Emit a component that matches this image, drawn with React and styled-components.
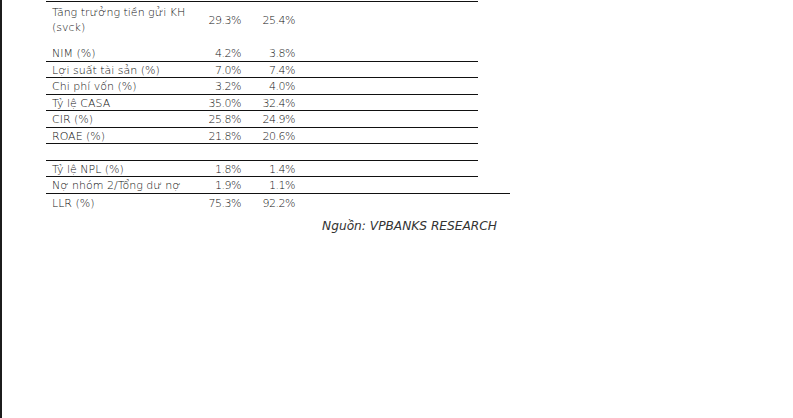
import styled, { createGlobalStyle } from 'styled-components';

const GlobalStyle = createGlobalStyle`
  html, body {
    margin: 0;
    padding: 0;
    background: #fff;
  }
  body {
    font-family: 'DejaVu Sans', 'Noto Sans', sans-serif;
    color: #111;
  }
`;

const rows = [
  { label: 'NIM (%)', a: '4.2%', b: '3.8%' },
  { label: 'Lợi suất tài sản (%)', a: '7.0%', b: '7.4%' },
  { label: 'Chi phí vốn (%)', a: '3.2%', b: '4.0%' },
  { label: 'Tỷ lệ CASA', a: '35.0%', b: '32.4%' },
  { label: 'CIR (%)', a: '25.8%', b: '24.9%' },
  { label: 'ROAE (%)', a: '21.8%', b: '20.6%' },
  { label: '', a: '', b: '' },
  { label: 'Tỷ lệ NPL (%)', a: '1.8%', b: '1.4%' },
  { label: 'Nợ nhóm 2/Tổng dư nợ', a: '1.9%', b: '1.1%', wide: true },
];

const App = () => {
  return (
    <>
      <GlobalStyle />
      <Page>
        <Table>
          <FirstRow>
            <Label>
              Tăng trưởng tiền gửi KH
              <br />
              (svck)
            </Label>
            <Value>29.3%</Value>
            <Value>25.4%</Value>
          </FirstRow>
          {rows.map((row, index) => (
            <Row key={index} $wide={row.wide}>
              <Label>{row.label}</Label>
              <Value>{row.a}</Value>
              <Value>{row.b}</Value>
            </Row>
          ))}
          <Row $last>
            <Label>LLR (%)</Label>
            <Value>75.3%</Value>
            <Value>92.2%</Value>
          </Row>
        </Table>
        <Source>Nguồn: VPBANKS RESEARCH</Source>
      </Page>
    </>
  );
};

const Page = styled.div`
  min-height: 100vh;
  box-sizing: border-box;
  border-left: 2px solid #1c1c1c;
  padding-top: 1px;
  padding-left: 44px;
`;

const Table = styled.div`
  width: 432px;
  border-top: 1px solid #111;
  display: flex;
  flex-direction: column;
`;

const Row = styled.div`
  display: grid;
  grid-template-columns: 144px 51px 54px 1fr;
  align-items: center;
  height: ${({ $last }) => ($last ? '19px' : '15.5px')};
  width: ${({ $wide }) => ($wide ? '464px' : '100%')};
  border-bottom: ${({ $last }) => ($last ? 'none' : '1px solid #111')};
  font-size: 11px;
  line-height: 15px;

  & > div {
    padding-top: 1px;
  }
`;

const FirstRow = styled(Row)`
  height: auto;
  padding: 2px 0 10px;
  border-bottom: none;
`;

const Label = styled.div`
  padding-left: 6px;
  white-space: nowrap;
  font-weight: 200;
`;

const Value = styled.div`
  text-align: right;
  font-weight: 200;
  letter-spacing: -0.5px;
`;

const Source = styled.div`
  width: 451px;
  margin-top: 5px;
  text-align: right;
  font-style: italic;
  font-weight: 200;
  font-size: 12.2px;
  line-height: 16px;
  color: #333;
`;

export default App;
